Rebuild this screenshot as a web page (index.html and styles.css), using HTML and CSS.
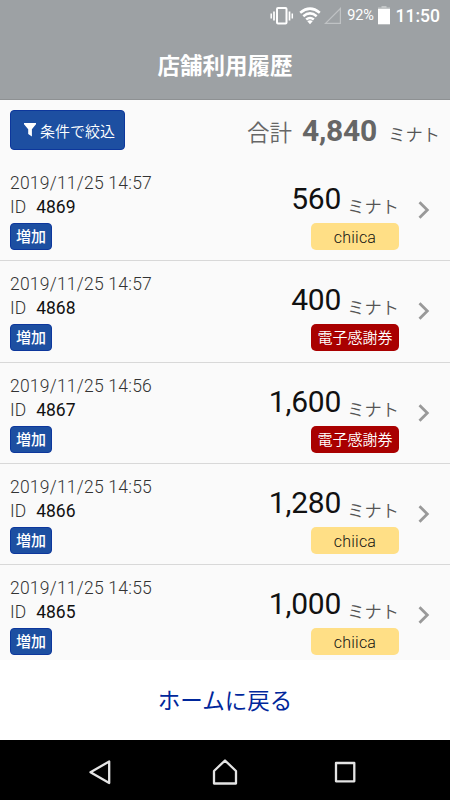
FILE: index.html
```html
<!DOCTYPE html>
<html lang="ja">
<head>
    <meta charset="UTF-8">
    <meta name="viewport" content="width=device-width, initial-scale=1.0">
    <title>店舗利用履歴</title>
    <link rel="stylesheet" href="styles.css">
</head>
<body>
<div class="screen">
    <header class="header">
        <div class="status-bar">
            <svg class="icon-vibrate" width="24" height="20" viewBox="0 0 24 20" fill="none" stroke="#fff">
                <rect x="7" y="2" width="9.5" height="15.5" rx="1" stroke-width="2"/>
                <path d="M4 5.5v9M19.5 5.5v9" stroke-width="1.7"/>
                <path d="M1.2 7.5v5M22.3 7.5v5" stroke-width="1.5"/>
            </svg>
            <svg class="icon-wifi" width="22" height="18" viewBox="0 0 22 18" fill="none" stroke="#fff" stroke-width="2.6">
                <path d="M1.2 5.7Q11 -2.3 20.8 5.7"/>
                <path d="M4.3 9.2Q11 3.7 17.7 9.2"/>
                <path d="M7.2 12.6Q11 9.4 14.8 12.6"/>
                <path d="M8.3 14.2Q11 12.2 13.7 14.2L11 17.3z" fill="#fff" stroke="none"/>
            </svg>
            <svg class="icon-signal" width="18" height="18" viewBox="0 0 18 18" fill="none" stroke="#bfc2c4" stroke-width="1.2">
                <path d="M1.5 16.4H16.4V1.5z"/>
            </svg>
            <span class="battery-text">92%</span>
            <svg class="icon-battery" width="12" height="19" viewBox="0 0 12 19">
                <path d="M3.5 0h5v1.5h3.5v2H0v-2h3.5z" fill="#c4c7c8"/>
                <path d="M0 3h12v15.3H0z" fill="#fff"/>
            </svg>
            <span class="clock">11:50</span>
        </div>
        <h1 class="title">店舗利用履歴</h1>
    </header>

    <div class="summary">
        <button class="filter-btn">
            <svg width="12" height="14" viewBox="0 0 12 14"><path d="M0 0h12v1.2L7.9 6.2v7.3L4.2 11V6.2L0 1.2z" fill="#fff"/></svg>
            <span>条件で絞込</span>
        </button>
        <div class="total">
            <span class="total-label">合計</span>
            <span class="total-value">4,840</span>
            <span class="unit">ミナト</span>
        </div>
    </div>

    <main class="history">
        <div class="row">
            <div class="info">
                <div class="date">2019/11/25 14:57</div>
                <div class="id"><span class="id-label">ID</span>4869</div>
                <div class="tag">増加</div>
            </div>
            <div class="amount">
                <div class="price"><span class="value">560</span><span class="unit">ミナト</span></div>
                <div class="badge chiica">chiica</div>
            </div>
            <svg class="chevron" width="12" height="18" viewBox="0 0 12 18"><path d="M1.5 1.2L9.3 9l-7.8 7.8"/></svg>
        </div>
        <div class="row">
            <div class="info">
                <div class="date">2019/11/25 14:57</div>
                <div class="id"><span class="id-label">ID</span>4868</div>
                <div class="tag">増加</div>
            </div>
            <div class="amount">
                <div class="price"><span class="value">400</span><span class="unit">ミナト</span></div>
                <div class="badge ticket">電子感謝券</div>
            </div>
            <svg class="chevron" width="12" height="18" viewBox="0 0 12 18"><path d="M1.5 1.2L9.3 9l-7.8 7.8"/></svg>
        </div>
        <div class="row">
            <div class="info">
                <div class="date">2019/11/25 14:56</div>
                <div class="id"><span class="id-label">ID</span>4867</div>
                <div class="tag">増加</div>
            </div>
            <div class="amount">
                <div class="price"><span class="value">1,600</span><span class="unit">ミナト</span></div>
                <div class="badge ticket">電子感謝券</div>
            </div>
            <svg class="chevron" width="12" height="18" viewBox="0 0 12 18"><path d="M1.5 1.2L9.3 9l-7.8 7.8"/></svg>
        </div>
        <div class="row">
            <div class="info">
                <div class="date">2019/11/25 14:55</div>
                <div class="id"><span class="id-label">ID</span>4866</div>
                <div class="tag">増加</div>
            </div>
            <div class="amount">
                <div class="price"><span class="value">1,280</span><span class="unit">ミナト</span></div>
                <div class="badge chiica">chiica</div>
            </div>
            <svg class="chevron" width="12" height="18" viewBox="0 0 12 18"><path d="M1.5 1.2L9.3 9l-7.8 7.8"/></svg>
        </div>
        <div class="row">
            <div class="info">
                <div class="date">2019/11/25 14:55</div>
                <div class="id"><span class="id-label">ID</span>4865</div>
                <div class="tag">増加</div>
            </div>
            <div class="amount">
                <div class="price"><span class="value">1,000</span><span class="unit">ミナト</span></div>
                <div class="badge chiica">chiica</div>
            </div>
            <svg class="chevron" width="12" height="18" viewBox="0 0 12 18"><path d="M1.5 1.2L9.3 9l-7.8 7.8"/></svg>
        </div>
    </main>

    <div class="home-link">ホームに戻る</div>

    <nav class="nav-bar">
        <svg width="28" height="28" viewBox="0 0 28 28"><path d="M23.2 3.5v21.5L4.5 14.2z"/></svg>
        <svg width="28" height="28" viewBox="0 0 28 28"><path d="M3 25.5V13L14 2.5 25 13v12.5z"/></svg>
        <svg width="28" height="28" viewBox="0 0 28 28"><path d="M5 5h18.3v18.3H5z"/></svg>
    </nav>
</div>
</body>
</html>
```
FILE: styles.css
```css
* {
    box-sizing: border-box;
}

body {
    margin: 0;
    background: #fafafa;
    font-family: Roboto, "Noto Sans CJK JP", sans-serif;
    color: #111;
}

.screen {
    display: flex;
    flex-direction: column;
    width: 450px;
    height: 800px;
    overflow: hidden;
}

/* Header */
.header {
    flex: none;
    height: 100px;
    background: #9da1a4;
    border-bottom: 1px solid #8e9193;
    color: #fff;
}

.status-bar {
    display: flex;
    align-items: center;
    justify-content: flex-end;
    height: 31px;
    padding-right: 10px;
}

.icon-wifi {
    margin-left: 5px;
}

.icon-signal {
    margin-left: 3px;
}

.battery-text {
    margin-left: 5px;
    font-size: 14.5px;
    letter-spacing: -0.2px;
}

.icon-battery {
    margin-left: 4px;
}

.clock {
    margin-left: 6px;
    font-size: 17.5px;
    font-weight: 500;
}

.title {
    margin: 0;
    font-size: 22.5px;
    font-weight: bold;
    line-height: 70px;
    text-align: center;
}

/* Filter and total */
.summary {
    flex: none;
    display: flex;
    align-items: center;
    justify-content: space-between;
    height: 60px;
    padding: 0 10px;
}

.filter-btn {
    display: flex;
    align-items: center;
    gap: 4px;
    width: 115px;
    height: 40px;
    padding: 0 0 0 13px;
    border: 1px solid #0d379c;
    border-radius: 4px;
    background: #1d4fa1;
    color: #fff;
    font-family: inherit;
    font-size: 15px;
    font-weight: 350;
}

.total {
    display: flex;
    align-items: baseline;
    padding-top: 1px;
    color: #666;
}

.total-label {
    font-size: 22.5px;
    font-weight: 350;
}

.total-value {
    margin: 0 11px 0 10px;
    font-size: 30px;
    font-weight: bold;
    letter-spacing: -0.2px;
}

.unit {
    color: #555;
    font-size: 17.3px;
    font-weight: 350;
}

/* History list */
.history {
    flex: none;
    height: 500px;
    overflow: hidden;
}

.row {
    display: flex;
    height: 101.25px;
    padding: 11px 20px 0 10px;
    border-bottom: 1px solid #d8d8d8;
}

.info {
    flex: 1;
    font-size: 17.5px;
    line-height: 24px;
}

.date {
    color: #333;
    font-weight: 300;
    letter-spacing: 0.23px;
}

.id-label {
    margin-right: 10px;
    color: #333;
    font-weight: 300;
}

.tag {
    width: 42px;
    height: 27px;
    margin-top: 4px;
    border: 1px solid #0d379c;
    border-radius: 4px;
    background: #1d4fa1;
    color: #fff;
    font-size: 15px;
    font-weight: 500;
    line-height: 27px;
    text-align: center;
}

.amount {
    display: flex;
    flex-direction: column;
    align-items: flex-end;
}

.price {
    display: flex;
    align-items: baseline;
    height: 52px;
    line-height: 55px;
}

.price .unit {
    padding-top: 6px;
    align-self: flex-start;
    line-height: 61px;
}

.value {
    margin-right: 6px;
    font-size: 30px;
    letter-spacing: -0.2px;
}

.badge {
    width: 88px;
    height: 27px;
    border-radius: 5px;
    font-size: 15px;
    font-weight: 350;
    line-height: 28px;
    text-align: center;
}

.chiica {
    background: #ffdf86;
    font-size: 16px;
    letter-spacing: 0.2px;
    line-height: 29px;
}

.ticket {
    background: #a90000;
    color: #fff;
}

.chevron {
    margin: 30px 0 0 19px;
    fill: none;
    stroke: #999;
    stroke-width: 2.8;
}

/* Bottom */
.home-link {
    flex: none;
    height: 80px;
    background: #fff;
    color: #00279b;
    font-size: 22.5px;
    line-height: 83px;
    text-align: center;
}

.nav-bar {
    flex: none;
    display: flex;
    align-items: center;
    justify-content: space-between;
    height: 60px;
    padding: 3px 91px 0 86px;
    background: #000;
}

.nav-bar svg {
    fill: none;
    stroke: #e4e4e4;
    stroke-width: 2.3;
    stroke-linejoin: round;
}

.nav-bar svg:nth-child(2) {
    margin-left: 5px;
}
```
